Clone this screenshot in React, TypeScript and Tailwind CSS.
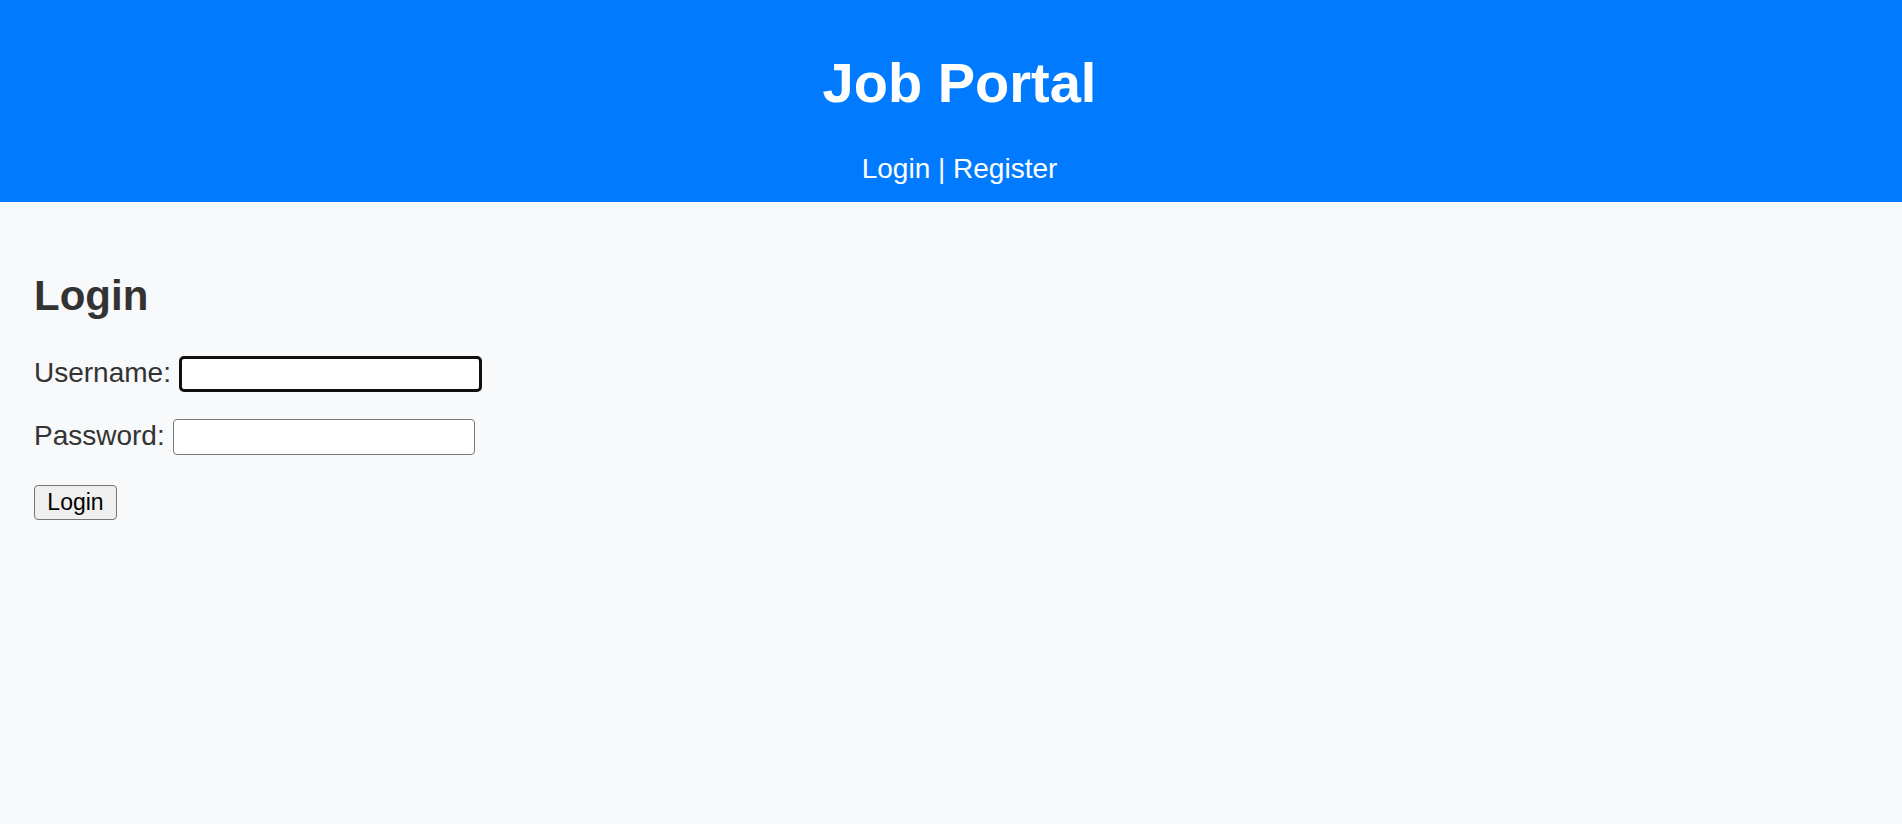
import { useState } from 'react';

export default function App() {
  const [username, setUsername] = useState('');
  const [password, setPassword] = useState('');

  return (
    <div className="min-h-[824px] bg-[#f8f9fa] text-[#333] font-['Liberation_Sans',Arial,sans-serif]">
      <header className="bg-[#007bff] text-white text-center pl-[17px] pt-[51px] pb-[17px]">
        <h1 className="text-[56px] leading-[64px] font-bold mb-[38px]">Job Portal</h1>
        <nav className="text-[28px] leading-[32px]">
          <a href="#login" className="text-white">Login</a> | <a href="#register" className="text-white">Register</a>
        </nav>
      </header>

      <main className="px-[34px] pt-[70px]">
        <h2 className="text-[42px] leading-[48px] font-bold mb-[36px]">Login</h2>
        <form onSubmit={(e) => e.preventDefault()}>
          <div className="flex items-baseline gap-[8px] mb-[27px] text-[28px] leading-[32px]">
            <label htmlFor="username">Username:</label>
            <input
              id="username"
              autoFocus
              value={username}
              onChange={(e) => setUsername(e.target.value)}
              className="w-[303px] h-[36px] px-[4px] bg-white text-black text-[23px] border-[3px] border-[#101010] rounded-[5px] outline-none"
            />
          </div>
          <div className="flex items-baseline gap-[8px] mb-[27px] text-[28px] leading-[32px]">
            <label htmlFor="password">Password:</label>
            <input
              id="password"
              type="password"
              value={password}
              onChange={(e) => setPassword(e.target.value)}
              className="w-[302px] h-[36px] px-[4px] bg-white text-black text-[23px] border border-[#767676] rounded-[4px] outline-none"
            />
          </div>
          <div className="pt-[3px]">
            <button
              type="submit"
              className="w-[83px] h-[35px] bg-[#efefef] text-black text-[23px] leading-none border border-[#767676] rounded-[4px]"
            >
              Login
            </button>
          </div>
        </form>
      </main>
    </div>
  );
}
